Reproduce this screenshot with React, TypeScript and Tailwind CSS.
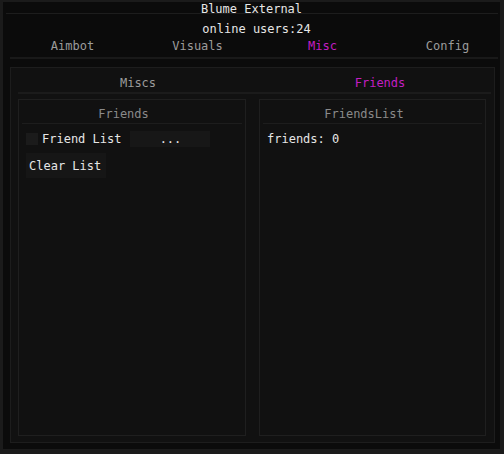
import { useState } from "react";

const TABS = ["Aimbot", "Visuals", "Misc", "Config"];
const SUB_TABS = ["Miscs", "Friends"];

type GroupProps = {
  title: string;
  className?: string;
  children?: React.ReactNode;
};

function Group({ title, className = "", children }: GroupProps) {
  return (
    <div className={`flex flex-col border border-[#1f1f1f] bg-[#111111] ${className}`}>
      <div className="mt-[6px] flex h-[16px] items-center justify-center pr-[17px] text-[#8a8a8a]">
        {title}
      </div>
      <div className="mx-[3px] mt-[1px] h-px bg-[#1d1d1d]" />
      {children}
    </div>
  );
}

export default function App() {
  const [tab, setTab] = useState("Misc");
  const [subTab, setSubTab] = useState("Friends");
  const [friendList, setFriendList] = useState(false);
  const [friends, setFriends] = useState<string[]>([]);

  return (
    <div
      className="h-[454px] w-[504px] overflow-hidden bg-[#1b1b1b] pb-[5px] pl-[3px] pr-[4px] pt-[2px] text-[12px] leading-none text-[#e6e6e6]"
      style={{ fontFamily: '"DejaVu Sans Mono", "Liberation Mono", monospace' }}
    >
      <div className="flex h-full flex-col overflow-hidden bg-[#0b0b0b]">
        {/* title bar */}
        <div className="flex h-[11px] items-center justify-center pt-[2px]">Blume External</div>
        <div className="ml-[3px] mr-[2px] h-px bg-[#1d1d1d]" />

        <div className="mt-[7px] flex h-[16px] items-center justify-center pl-[10px]">online users:{24}</div>

        {/* main tabs */}
        <div className="ml-[7px] mt-[1px] flex h-[16px] shrink-0">
          {TABS.map((t) => (
            <button
              key={t}
              onClick={() => setTab(t)}
              className={`flex h-full w-[125px] shrink-0 items-center justify-center ${
                tab === t ? "text-[#c21ec2]" : "text-[#9c9c9c]"
              }`}
            >
              {t}
            </button>
          ))}
        </div>
        <div className="ml-[7px] mr-[2px] mt-[3px] h-[2px] bg-[#191919]" />

        {/* content panel */}
        <div className="ml-[7px] mt-[8px] flex h-[376px] w-[485px] flex-col border border-[#1d1d1d] bg-[#111111]">
          <div className="ml-[6px] mt-[7px] flex h-[16px]">
            {SUB_TABS.map((t) => (
              <button
                key={t}
                onClick={() => setSubTab(t)}
                className={`flex h-full w-[242px] shrink-0 items-center justify-center ${
                  subTab === t ? "text-[#c21ec2]" : "text-[#9c9c9c]"
                }`}
              >
                {t}
              </button>
            ))}
          </div>
          <div className="ml-[7px] mr-[3px] mt-[1px] h-[2px] bg-[#1b1b1b]" />

          <div className="ml-[7px] mt-[5px] flex h-[337px] gap-[13px]">
            <Group title="Friends" className="w-[228px]">
              <div className="ml-[7px] mt-[7px] flex items-center">
                <button
                  onClick={() => setFriendList(!friendList)}
                  className="h-[12px] w-[12px] bg-[#1b1b1b]"
                >
                  {friendList && <span className="block h-full w-full bg-[#c21ec2]" />}
                </button>
                <span className="ml-[4px]">Friend List</span>
                <button className="ml-[9px] flex h-[16px] w-[80px] items-center justify-center bg-[#171717]">
                  ...
                </button>
              </div>
              <button
                onClick={() => setFriends([])}
                className="ml-[7px] mt-[6px] flex h-[25px] w-[80px] items-center pl-[3px] bg-[#161616]"
              >
                Clear List
              </button>
            </Group>

            <Group title="FriendsList" className="w-[227px]">
              <div className="ml-[7px] mt-[9px] flex h-[12px] items-center">friends: {friends.length}</div>
            </Group>
          </div>
        </div>
      </div>
    </div>
  );
}
